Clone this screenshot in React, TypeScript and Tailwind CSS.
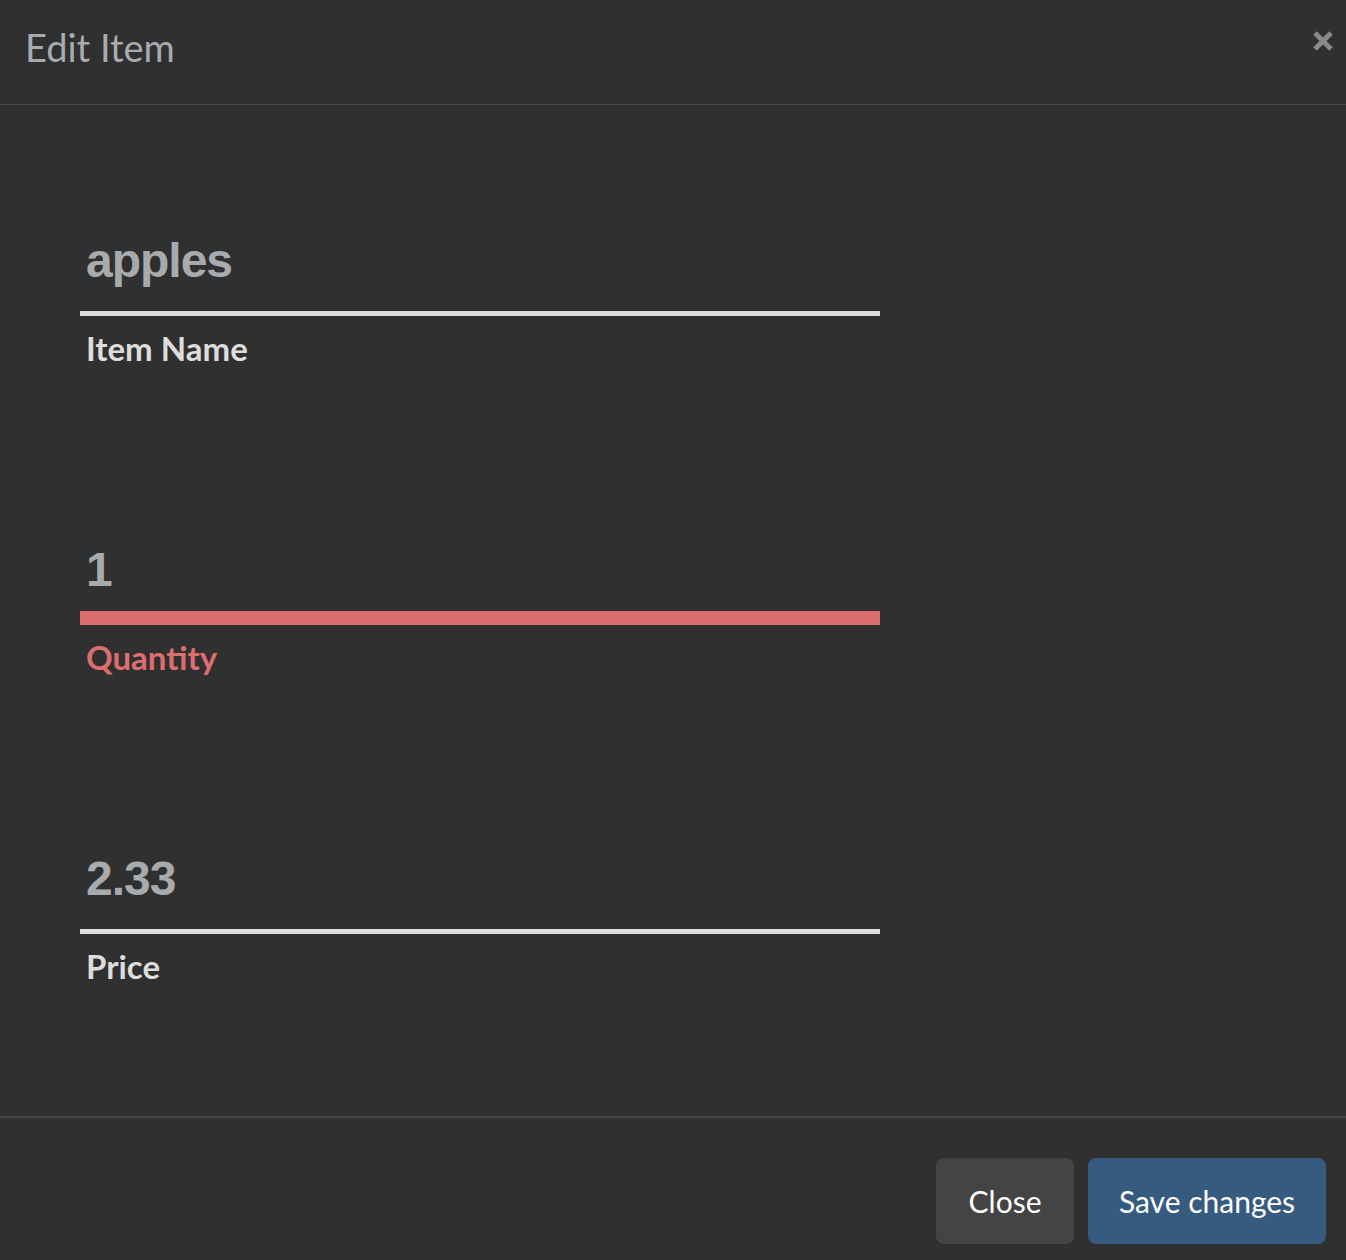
import React from 'react';

interface Field {
  value: string;
  label: string;
  focused?: boolean;
}

const fields: Field[] = [
  { value: 'apples', label: 'Item Name' },
  { value: '1', label: 'Quantity', focused: true },
  { value: '2.33', label: 'Price' },
];

const App: React.FC = () => {
  return (
    <div className="w-[1346px] h-[1260px] bg-[#303030] flex flex-col font-['Lato',sans-serif]">
      {/* Header */}
      <div className="h-[105px] shrink-0 flex justify-between border-b border-[#464646] pl-[25px] pr-[12px]">
        <h1 className="pt-[25px] text-[38px] leading-[1.2] text-[#a9abae] font-normal">Edit Item</h1>
        <button className="mt-[30px] w-[22px] h-[22px] text-[#888888]">
          <svg width="22" height="22" viewBox="0 0 22 22">
            <path d="M3 3 L19 19 M19 3 L3 19" stroke="currentColor" strokeWidth="5" strokeLinecap="butt" />
          </svg>
        </button>
      </div>

      {/* Body */}
      <div className="flex-1 pt-[132px] pl-[80px]">
        <div className="w-[800px] flex flex-col gap-[182px]">
          {fields.map((f) => (
            <div key={f.label} className="flex flex-col">
              <div className="pl-[6px] h-[48px] text-[48px] leading-[48px] font-bold tracking-[-1px] text-[#a8abae] font-['Liberation_Sans',Arial,sans-serif]">
                {f.value}
              </div>
              <div className="mt-[17px] h-[14px] flex flex-col justify-end">
                <div className={f.focused ? 'h-[14px] bg-[#dc6e6f]' : 'h-[5px] bg-[#dddddd]'} />
              </div>
              <label
                className={
                  'pl-[6px] mt-[16px] text-[33px] leading-[32px] font-bold ' +
                  (f.focused ? 'text-[#dc6e6f]' : 'text-[#dddddd]')
                }
              >
                {f.label}
              </label>
            </div>
          ))}
        </div>
      </div>

      {/* Footer */}
      <div className="h-[144px] shrink-0 border-t-2 border-[#464646] flex justify-end items-start pt-[40px] pr-[20px] gap-[14px]">
        <button className="h-[86px] w-[138px] rounded-[8px] bg-[#444444] text-white text-[30px] flex items-center justify-center">
          Close
        </button>
        <button className="h-[86px] w-[238px] rounded-[8px] bg-[#375a7f] text-white text-[30px] flex items-center justify-center">
          Save changes
        </button>
      </div>
    </div>
  );
};

export default App;
